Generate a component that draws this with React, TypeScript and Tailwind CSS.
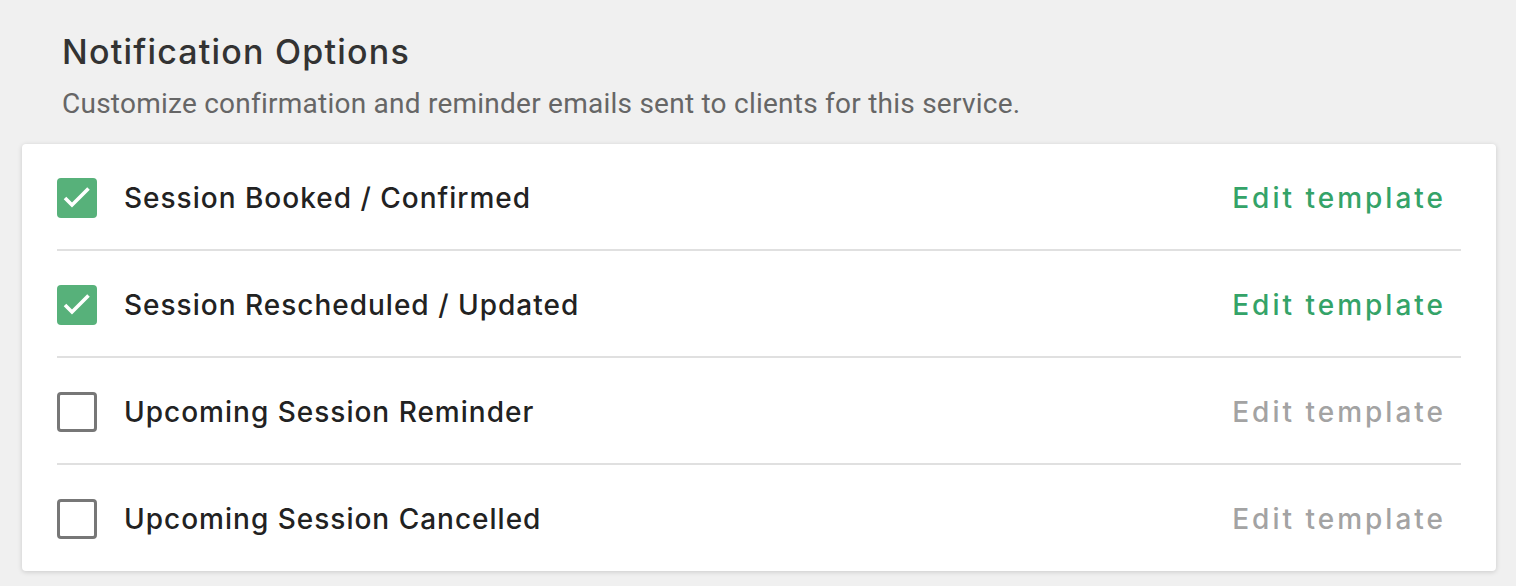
import React, { useState } from "react";

const options = [
  { label: "Session Booked / Confirmed", checked: true },
  { label: "Session Rescheduled / Updated", checked: true },
  { label: "Upcoming Session Reminder", checked: false },
  { label: "Upcoming Session Cancelled", checked: false },
];

const CheckBox = ({ checked, onClick }: { checked: boolean; onClick: () => void }) => {
  if (checked) {
    return (
      <button
        onClick={onClick}
        className="w-[40px] h-[40px] shrink-0 rounded-[4px] bg-[#57b17a] flex items-center justify-center"
      >
        <svg width="40" height="40" viewBox="0 0 40 40" fill="none">
          <path d="M8 20 L15 27 L31.5 10.5" stroke="white" strokeWidth="3.6" />
        </svg>
      </button>
    );
  }
  return (
    <button
      onClick={onClick}
      className="w-[40px] h-[40px] shrink-0 rounded-[4px] border-[3px] border-[#777777] bg-white"
    />
  );
};

const App = () => {
  const [items, setItems] = useState(options);

  const toggle = (i: number) =>
    setItems((prev) => prev.map((o, idx) => (idx === i ? { ...o, checked: !o.checked } : o)));

  return (
    <div className="w-full min-h-[586px] bg-[#f0f0f0] pt-[32px] px-[22px] pb-[14px]">
      <div className="px-[40px]">
        <h2 className="font-['Inter',sans-serif] font-medium text-[34px] leading-[40px] tracking-[1.2px] text-[#333333]">
          Notification Options
        </h2>
        <p className="mt-[14px] font-['Roboto',sans-serif] text-[28px] leading-[36px] tracking-[0.24px] text-[#666666]">
          Customize confirmation and reminder emails sent to clients for this service.
        </p>
      </div>
      <div className="mt-[22px] w-[1474px] bg-white rounded-[4px] shadow-[0_1px_5px_rgba(0,0,0,0.16)] px-[35px]">
        {items.map((o, i) => (
          <div
            key={o.label}
            className={`flex items-center pt-[34px] ${
              i < items.length - 1 ? "pb-[31px] border-b-2 border-[#e0e0e0]" : "pb-[32px]"
            }`}
          >
            <CheckBox checked={o.checked} onClick={() => toggle(i)} />
            <span className="ml-[27px] font-['Inter',sans-serif] font-medium text-[28px] leading-[40px] tracking-[1px] text-[#222222]">
              {o.label}
            </span>
            <a
              href="#"
              className={`ml-auto mr-[15px] font-['Inter',sans-serif] font-medium text-[28px] leading-[40px] tracking-[3px] ${
                o.checked ? "text-[#34a368]" : "text-[#a3a3a3]"
              }`}
            >
              Edit template
            </a>
          </div>
        ))}
      </div>
    </div>
  );
};

export default App;
